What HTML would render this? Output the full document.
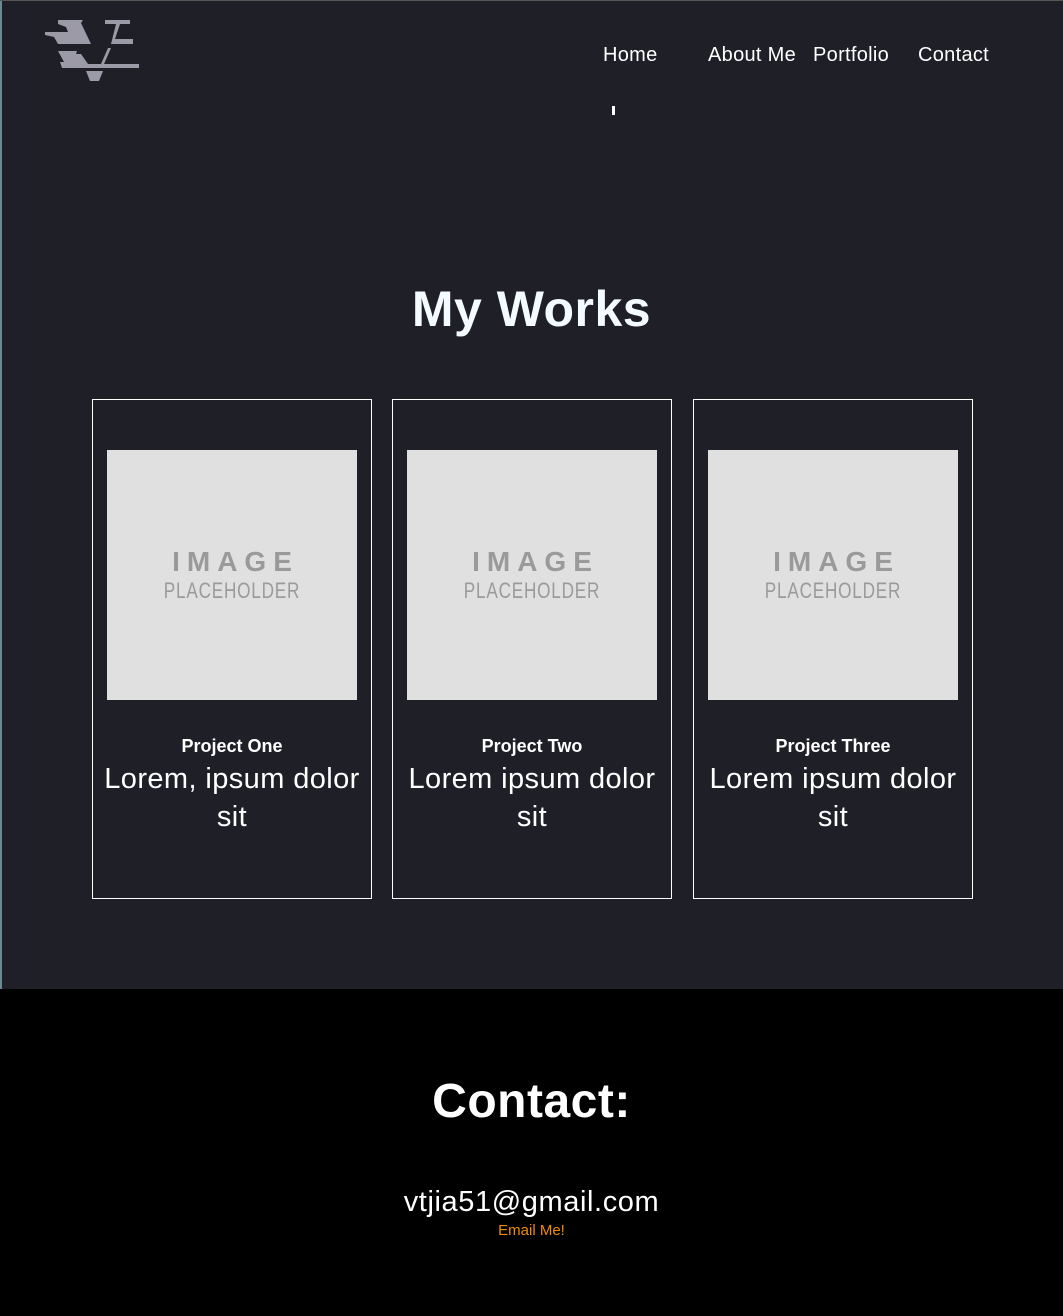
<!DOCTYPE html>
<html><head><meta charset="utf-8"><style>
*{margin:0;padding:0;box-sizing:border-box}
html,body{width:1063px;height:1316px;overflow:hidden;background:#1e1f27;font-family:"Liberation Sans",sans-serif;color:#fff}
.a{position:absolute}
.nav{top:43px;font-size:20px;line-height:24px;white-space:nowrap;letter-spacing:.3px}
.card{top:399px;width:280px;height:500px;border:1px solid #fff}
.img{position:absolute;left:14px;top:50px;width:250px;height:250px;background:#e0e0e0;text-align:center;color:#9a9a9a}
.img .t1{position:absolute;top:96px;left:0;right:0;font-weight:bold;font-size:28px;letter-spacing:7px;padding-left:7px}
.img .t2{position:absolute;top:128px;left:0;right:0;font-size:22px;letter-spacing:1px;transform:scaleX(.78)}
.pt{position:absolute;top:336px;left:0;right:0;text-align:center;font-weight:bold;font-size:18px}
.pd{position:absolute;top:360px;left:-4px;right:-4px;text-align:center;font-size:29px;line-height:38px;letter-spacing:.4px}
</style></head><body>
<div class="a" style="left:0;top:0;width:2px;height:990px;background:#6a8a96"></div>
<div class="a" style="left:0;top:0;width:1063px;height:1px;background:#555"></div>
<svg class="a" style="left:0;top:0" width="150" height="90" viewBox="0 0 150 90">
<g fill="#9b9aa6">
<polygon points="58,20 83,20 81,23 91,44 58,44 54,37 45,35 45,32 68,32 66,27 58,24"/>
<polygon points="58,51 77,51 76,54 81,54 88,64 101,64 108,48 111,48 104,64 139,64 139,68 62,68 60,62 64,62"/>
<polygon points="86,71 103,71 99,81 90,81"/>
<polygon points="105,20 130,20 130,24 120,24 115,39 133,39 133,44 111,44 116,24 105,24"/>
</g></svg>
<div class="a nav" style="left:603px">Home</div>
<div class="a nav" style="left:708px">About Me</div>
<div class="a nav" style="left:813px">Portfolio</div>
<div class="a nav" style="left:918px">Contact</div>
<div class="a" style="left:612px;top:106px;width:3px;height:9px;background:#fff"></div>
<div class="a" style="left:0;top:279px;width:1063px;text-align:center;font-weight:bold;font-size:50px;line-height:60px;color:#f4fbff;letter-spacing:.5px">My Works</div>
<div class="a card" style="left:92px"><div class="img"><div class="t1">IMAGE</div><div class="t2">PLACEHOLDER</div></div><div class="pt">Project One</div><div class="pd">Lorem, ipsum dolor<br>sit</div></div>
<div class="a card" style="left:392px"><div class="img"><div class="t1">IMAGE</div><div class="t2">PLACEHOLDER</div></div><div class="pt">Project Two</div><div class="pd">Lorem ipsum dolor<br>sit</div></div>
<div class="a card" style="left:693px"><div class="img"><div class="t1">IMAGE</div><div class="t2">PLACEHOLDER</div></div><div class="pt">Project Three</div><div class="pd">Lorem ipsum dolor<br>sit</div></div>
<div class="a" style="left:0;top:989px;width:1063px;height:327px;background:#000"></div>
<div class="a" style="left:0;top:1072px;width:1063px;text-align:center;font-weight:bold;font-size:48px;line-height:60px;letter-spacing:.5px">Contact:</div>
<div class="a" style="left:0;top:1184px;width:1063px;text-align:center;font-size:29px;line-height:36px;letter-spacing:.6px">vtjia51@gmail.com</div>
<div class="a" style="left:0;top:1221px;width:1063px;text-align:center;font-size:15px;line-height:20px;color:#f08c00">Email Me!</div>
</body></html>
